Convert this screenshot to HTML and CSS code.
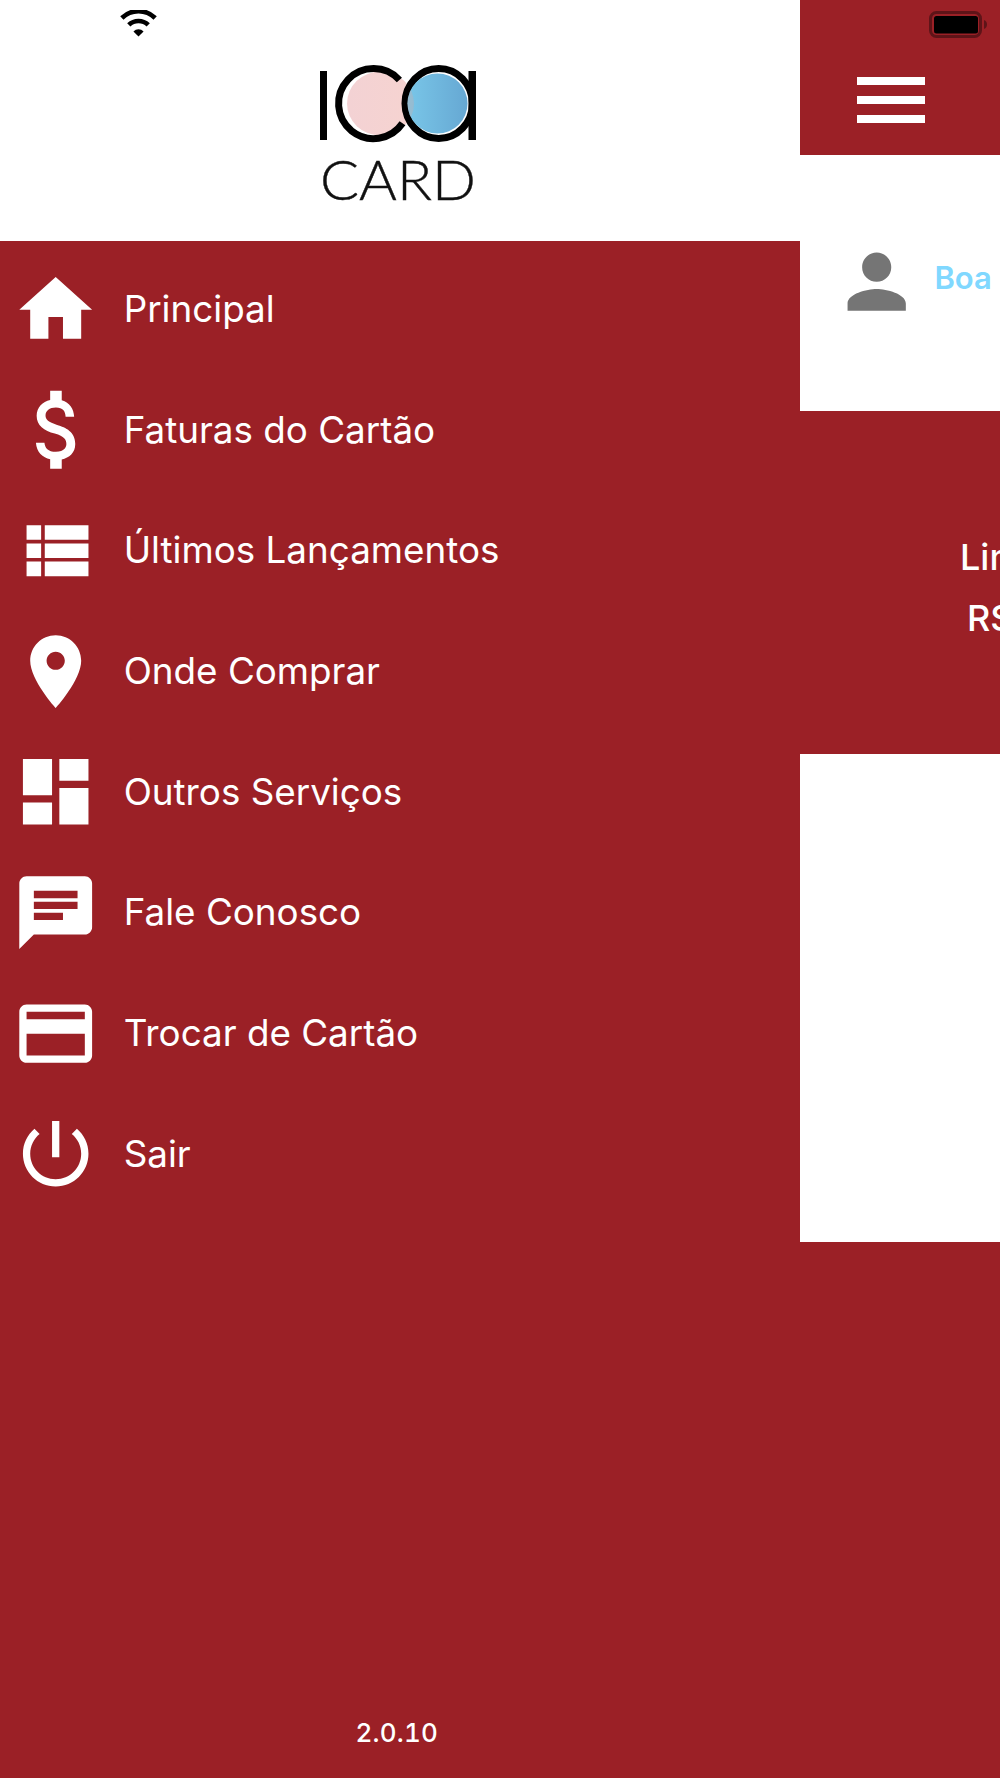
FILE: index.html
```html
<!DOCTYPE html>
<html>
    <head>
        <meta charset="utf-8">
        <title>ICA Card</title>
        <link rel="stylesheet" href="styles.css">
    </head>
    <body>
        <div class="screen">
            <!-- status bar icons sit on top of both panels -->
            <svg class="wifi" viewBox="0 0 40 30">
                <path class="wifi-arc" d="M2 8.500a25.500 25.500 0 0 1 36 0"/>
                <path class="wifi-arc" d="M9.500 16a15 15 0 0 1 21 0"/>
                <path d="M14.500 23a8 8 0 0 1 11 0l-5.500 5.500z"/>
            </svg>
            <svg class="battery" viewBox="0 0 60 28">
                <rect class="battery-case" x="1.500" y="1.500" width="50" height="24" rx="6"/>
                <rect x="5" y="5" width="44" height="17.500" rx="2.500"/>
                <path class="battery-nub" d="M55 9c2 .5 3 2.500 3 4.500s-1 4-3 4.500z"/>
            </svg>

            <aside class="drawer">
                <header class="drawer-logo">
                    <svg class="logo" viewBox="0 0 164 140">
                        <defs>
                            <linearGradient id="pink">
                                <stop offset="0" stop-color="#f3d2d4"/>
                                <stop offset="1" stop-color="#f6d3d0"/>
                            </linearGradient>
                            <linearGradient id="blue">
                                <stop offset="0" stop-color="#79c6e8"/>
                                <stop offset="1" stop-color="#66a8d3"/>
                            </linearGradient>
                            <clipPath id="blue-disc">
                                <circle cx="119.500" cy="40.500" r="30"/>
                            </clipPath>
                        </defs>
                        <ellipse cx="62.500" cy="40.500" rx="33.500" ry="32" fill="url(#pink)"/>
                        <rect x="2" y="8" width="7" height="69"/>
                        <path class="logo-ring" d="M81.400 17A35 35 0 1 0 84.500 60.300"/>
                        <ellipse class="logo-ring" cx="120.700" cy="40.500" rx="33.700" ry="35"/>
                        <circle cx="119.500" cy="40.500" r="30" fill="url(#blue)"/>
                        <!-- where the two discs overlap -->
                        <ellipse class="logo-lens" cx="62.500" cy="40.500" rx="33.500" ry="32" clip-path="url(#blue-disc)"/>
                        <rect x="150.500" y="8" width="7.500" height="69"/>
                        <text class="logo-word" x="2" y="137" textLength="156" lengthAdjust="spacingAndGlyphs">CARD</text>
                    </svg>
                </header>

                <nav class="menu">
                    <a class="menu-item">
                        <svg class="menu-icon" viewBox="0 0 24 24"><path d="M10 20v-6h4v6h5v-8h3L12 3 2 12h3v8z"/></svg>
                        <span>Principal</span>
                    </a>
                    <a class="menu-item">
                        <svg class="menu-icon" viewBox="0 0 24 24"><path transform="translate(12.600 12) scale(1.06 1.19) translate(-12 -12)" d="M11.800 10.900c-2.270-.590-3-1.200-3-2.150 0-1.090 1.010-1.850 2.700-1.850 1.780 0 2.440.850 2.500 2.100h2.210c-.070-1.720-1.120-3.300-3.210-3.810V3h-3v2.160c-1.940.420-3.500 1.680-3.500 3.610 0 2.310 1.910 3.460 4.700 4.130 2.500.600 3 1.480 3 2.410 0 .690-.490 1.790-2.700 1.790-2.060 0-2.870-.920-2.980-2.100h-2.200c.120 2.190 1.760 3.420 3.680 3.830V21h3v-2.150c1.950-.370 3.500-1.500 3.500-3.550 0-2.840-2.430-3.810-4.700-4.400z"/></svg>
                        <span>Faturas do Cartão</span>
                    </a>
                    <a class="menu-item">
                        <svg class="menu-icon" viewBox="0 0 24 24"><path d="M4 14h4v-4H4v4zm0 5h4v-4H4v4zm0-10h4V5H4v4zm5 5h12v-4H9v4zm0 5h12v-4H9v4zM9 5v4h12V5H9z"/></svg>
                        <span>Últimos Lançamentos</span>
                    </a>
                    <a class="menu-item">
                        <svg class="menu-icon" viewBox="0 0 24 24"><path d="M12 2C8.130 2 5 5.130 5 9c0 5.250 7 13 7 13s7-7.750 7-13c0-3.870-3.130-7-7-7zm0 9.500c-1.380 0-2.500-1.120-2.500-2.500s1.120-2.500 2.500-2.500 2.500 1.120 2.500 2.500-1.120 2.500-2.500 2.500z"/></svg>
                        <span>Onde Comprar</span>
                    </a>
                    <a class="menu-item">
                        <svg class="menu-icon" viewBox="0 0 24 24"><path d="M3 13h8V3H3v10zm0 8h8v-6H3v6zm10 0h8V11h-8v10zm0-18v6h8V3h-8z"/></svg>
                        <span>Outros Serviços</span>
                    </a>
                    <a class="menu-item">
                        <svg class="menu-icon" viewBox="0 0 24 24"><path d="M20 2H4c-1.100 0-1.990.900-1.990 2L2 22l4-4h14c1.100 0 2-.900 2-2V4c0-1.100-.900-2-2-2zM6 9h12v2H6V9zm8 5H6v-2h8v2zm4-6H6V6h12v2z"/></svg>
                        <span>Fale Conosco</span>
                    </a>
                    <a class="menu-item">
                        <svg class="menu-icon" viewBox="0 0 24 24"><path d="M20 4H4c-1.110 0-1.990.890-1.990 2L2 18c0 1.110.890 2 2 2h16c1.110 0 2-.890 2-2V6c0-1.110-.890-2-2-2zm0 14H4v-6h16v6zm0-10H4V6h16v2z"/></svg>
                        <span>Trocar de Cartão</span>
                    </a>
                    <a class="menu-item">
                        <svg class="menu-icon" viewBox="0 0 24 24"><path d="M13 3h-2v10h2V3zm4.830 2.170l-1.420 1.420C17.990 7.860 19 9.810 19 12c0 3.870-3.130 7-7 7s-7-3.130-7-7c0-2.190 1.010-4.140 2.580-5.420L6.170 5.170C4.230 6.820 3 9.260 3 12c0 4.970 4.030 9 9 9s9-4.030 9-9c0-2.740-1.230-5.180-3.170-6.830z"/></svg>
                        <span>Sair</span>
                    </a>
                </nav>

                <p class="version">2.0.10</p>
            </aside>

            <main class="content">
                <div class="topbar">
                    <div class="burger"><i></i><i></i><i></i></div>
                </div>
                <div class="greeting">
                    <svg class="person" viewBox="0 0 24 24"><path d="M12 12c2.210 0 4-1.790 4-4s-1.790-4-4-4-4 1.790-4 4 1.790 4 4 4zm0 2c-2.670 0-8 1.340-8 4v2h16v-2c0-2.660-5.330-4-8-4z"/></svg>
                    <span class="hello">Boa</span>
                </div>
                <div class="limit">
                    <p>Limite</p>
                    <p class="limit-value">R$</p>
                </div>
                <div class="panel"></div>
            </main>
        </div>
    </body>
</html>
```

FILE: styles.css
```css
* {
    box-sizing: border-box;
}
body {
    margin: 0;
    font-family: Inter, "Liberation Sans", sans-serif;
    background-color: #9b2026;
}
p {
    margin: 0;
}
.screen {
    position: relative;
    display: flex;
    width: 1000px;
    height: 1778px;
    overflow: hidden;
    background-color: #9b2026;
}

/* status bar */
.wifi {
    position: absolute;
    left: 120px;
    top: 10px;
    width: 37px;
    height: 28px;
}
.wifi-arc {
    fill: none;
    stroke: #000;
    stroke-width: 5;
}
.battery {
    position: absolute;
    left: 928.5px;
    top: 11px;
    width: 60px;
    height: 28px;
}
.battery-case {
    fill: none;
    stroke: #5e1418;
    stroke-width: 3;
}
.battery-nub {
    fill: #5e1418;
}

/* left drawer */
.drawer {
    display: flex;
    flex-direction: column;
    width: 799.5px;
    flex-shrink: 0;
}
.drawer-logo {
    display: flex;
    justify-content: center;
    height: 241px;
    padding-top: 63px;
    background-color: #fff;
}
.logo {
    width: 164px;
    height: 140px;
}
.logo-ring {
    fill: none;
    stroke: #000;
    stroke-width: 7;
}
.logo-lens {
    fill: #b4b4bc;
    opacity: 0.5;
}
.logo-word {
    font-family: Lato, sans-serif;
    font-weight: 300;
    font-size: 55px;
    fill: #111;
    stroke: #111;
    stroke-width: 0.4;
}
.menu {
    padding-top: 8px;
}
.menu-item {
    display: flex;
    align-items: center;
    height: 120.7px;
    padding-left: 11.8px;
    color: #fff;
    font-size: 36.8px;
}
.menu-item span {
    margin-bottom: 2px;
}
.menu-icon {
    width: 87.4px;
    height: 87.4px;
    margin-right: 24.5px;
    fill: #fff;
}
.version {
    margin-top: auto;
    padding: 0 6px 30px 0;
    text-align: center;
    color: #fff;
    font-size: 26px;
    font-weight: 500;
    letter-spacing: 0.2px;
    font-variant-numeric: tabular-nums;
}

/* right side, mostly pushed off screen while the drawer is open */
.content {
    display: flex;
    flex-direction: column;
    flex: 1;
}
.topbar {
    height: 155px;
    padding: 77px 0 0 57.5px;
}
.burger {
    display: flex;
    flex-direction: column;
    gap: 11.5px;
    width: 68px;
}
.burger i {
    display: block;
    height: 7.5px;
    background-color: #fff;
}
.greeting {
    display: flex;
    align-items: flex-start;
    height: 255.5px;
    padding: 83px 0 0 33.5px;
    background-color: #fff;
}
.person {
    width: 87.4px;
    height: 87.4px;
    flex-shrink: 0;
    fill: #757575;
}
.hello {
    margin: 21px 0 0 14px;
    color: #80d8ff;
    font-size: 31px;
    font-weight: 600;
    white-space: nowrap;
}
.limit {
    height: 343.5px;
    padding: 116px 0 0 160.5px;
    color: #fff;
    font-size: 36px;
    font-weight: 500;
    line-height: 61px;
    white-space: nowrap;
}
.limit-value {
    padding-left: 7px;
}
.panel {
    height: 488px;
    background-color: #fff;
}
```
